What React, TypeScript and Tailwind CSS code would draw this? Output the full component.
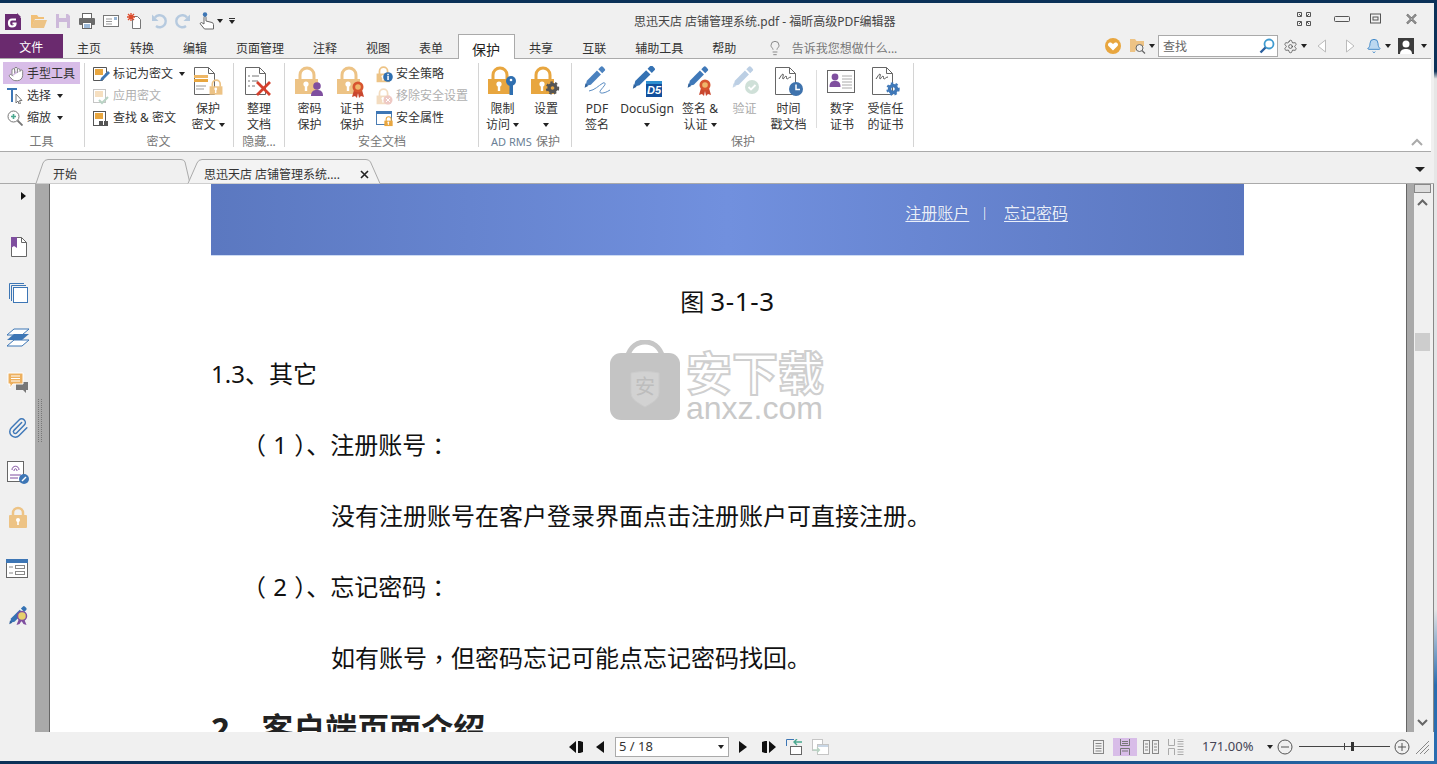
import { Bell, Hand, Lightbulb, Paperclip, Settings } from 'lucide-react';
import type { ReactNode } from 'react';

const ORANGE = '#e8a63f';
const SOFT_ORANGE = '#edc385';
const BLUE = '#3d76b5';
const PURPLE = '#7f4f9f';

function Caret({ className = 'border-t-[#222]' }: { className?: string }) {
  return <span className={`inline-block w-0 h-0 border-x-[3.5px] border-t-[4px] border-x-transparent ${className}`} />;
}

function Lock({ color }: { color: string }) {
  return (
    <>
      <path d="M6 14V9a7 7 0 0 1 14 0v5" fill="none" stroke={color} strokeWidth="3" />
      <rect x="1" y="13" width="23" height="15" fill={color} />
      <circle cx="12" cy="18" r="2.6" fill="#fff" />
      <rect x="10.8" y="19" width="2.4" height="6" fill="#fff" />
    </>
  );
}

function Big({ children }: { children: ReactNode }) {
  return (
    <svg width="32" height="32" viewBox="0 0 32 32" className="block">
      {children}
    </svg>
  );
}

function GearBadge({ x, y, color, r = 5 }: { x: number; y: number; color: string; r?: number }) {
  return (
    <g>
      <circle cx={x} cy={y} r={r} fill="none" stroke={color} strokeWidth="3.4" />
      <circle cx={x} cy={y} r={r + 2.2} fill="none" stroke={color} strokeWidth="2" strokeDasharray="2.4 2.4" />
    </g>
  );
}

function Ribbon({ x, y }: { x: number; y: number }) {
  return (
    <g>
      <path d={`M${x - 4} ${y + 3}l-2 7 3-1 2 2 1-5 1 5 2-2 3 1-2-7z`} fill="#c9472f" />
      <circle cx={x} cy={y} r="5.5" fill="#d7552f" />
      <circle cx={x} cy={y} r="2.8" fill="#efb66b" />
    </g>
  );
}

function PenShape({ color = BLUE, dark = '#2e5f98' }: { color?: string; dark?: string }) {
  return (
    <>
      <path d="M4 25l1.5-6L17 7.5l4.5 4.5L10 23.5z" fill={color} />
      <path d="M18.5 6l2.5-2.5a2 2 0 0 1 3 0l1.5 1.5a2 2 0 0 1 0 3L23 10.500z" fill={color} />
      <path d="M3 27l1-5 3 3z" fill={dark} />
    </>
  );
}

function DocOutline({ w = 21, h = 28 }: { w?: number; h?: number }) {
  return <path d={`M2.500 1.500h${w - 7}l6 6v${h - 7}h-${w - 1}z M${w - 4.500} 1.500v6h6`} fill="#fff" stroke="#666" strokeWidth="1" />;
}

function Squiggle() {
  return <path d="M6 13c2-3 3-5 4-5s-1 5 0 5 2-3 3-3 0 3 1 3 2-2 4-2" fill="none" stroke="#555" strokeWidth="1" />;
}

const ico = {
  protect: (
    <Big>
      <DocOutline />
      <rect x="2" y="9" width="14" height="3" fill="#eeb765" />
      <rect x="2" y="13" width="14" height="3" fill={ORANGE} />
      <path d="M4 20h10M4 23h8" stroke="#999" />
      <g transform="translate(17 13) scale(.56)">
        <Lock color={SOFT_ORANGE} />
      </g>
    </Big>
  ),
  organize: (
    <Big>
      <DocOutline />
      <path d="M5 10h2M9 10h7M5 15h2M9 15h6M5 20h2M9 20h3" stroke="#777" />
      <path d="M14 16l13 13M27 16L14 29" stroke="#d5402d" strokeWidth="2.8" />
    </Big>
  ),
  passwd: (
    <Big>
      <Lock color={SOFT_ORANGE} />
      <circle cx="23" cy="20" r="3.800" fill={PURPLE} />
      <path d="M17 30c0-5 2.500-6 6-6s6 1 6 6z" fill={PURPLE} />
    </Big>
  ),
  cert: (
    <Big>
      <Lock color={SOFT_ORANGE} />
      <Ribbon x={22} y={21} />
    </Big>
  ),
  limit: (
    <Big>
      <Lock color={ORANGE} />
      <circle cx="24" cy="15" r="5" fill="#2f6fb0" />
      <rect x="22.500" y="17" width="3.500" height="12" fill="#2f6fb0" />
      <circle cx="24" cy="14" r="1.300" fill="#fff" />
    </Big>
  ),
  setting: (
    <Big>
      <Lock color={ORANGE} />
      <GearBadge x={22.500} y={22} color="#555" r={3.500} />
    </Big>
  ),
  pdfSign: (
    <Big>
      <g transform="translate(1 -2) scale(.88)">
        <PenShape color="#4b82bf" />
      </g>
      <path d="M8 25c6-1 9-5 14-8 2-1 3 1 1 3-2 3-6 6-3 7 2 .5 6-1 9-3" fill="none" stroke="#5a8cc2" strokeWidth="1" />
    </Big>
  ),
  docuSign: (
    <Big>
      <g transform="translate(-1 -3) scale(.95)">
        <PenShape color="#3572b3" />
      </g>
      <rect x="15" y="15" width="16" height="16" fill="#124f9c" />
      <rect x="15" y="15" width="16" height="3" fill="#2f8fd0" />
      <text x="16" y="28" fontSize="11" fill="#fff" fontStyle="italic" fontWeight="700" fontFamily="Liberation Sans, sans-serif">D5</text>
    </Big>
  ),
  signCert: (
    <Big>
      <g transform="translate(1 -2) scale(.88)">
        <PenShape color="#3f78b8" />
      </g>
      <Ribbon x={21} y={19} />
    </Big>
  ),
  verify: (
    <Big>
      <g transform="translate(1 -2) scale(.88)">
        <PenShape color="#bccfe4" dark="#c7d7e8" />
      </g>
      <circle cx="23" cy="21" r="7" fill="#cfe0d8" />
      <path d="M19.500 21l2.500 2.500 4.500-4.500" fill="none" stroke="#fff" strokeWidth="1.800" />
    </Big>
  ),
  stamp: (
    <Big>
      <DocOutline />
      <Squiggle />
      <circle cx="23" cy="23" r="7" fill="#3f73ad" />
      <path d="M23 18.500V23.500h4" fill="none" stroke="#fff" strokeWidth="1.500" />
    </Big>
  ),
  digital: (
    <Big>
      <rect x="1.500" y="4.500" width="27" height="22" fill="#fff" stroke="#666" />
      <circle cx="9" cy="11" r="3.400" fill={PURPLE} />
      <path d="M3.500 21c0-5 2-6 5.500-6s5.500 1 5.500 6z" fill={PURPLE} />
      <path d="M16 10h10M16 13h10M16 16h10M16 19h10M16 22h10" stroke="#aaa" />
    </Big>
  ),
  trusted: (
    <Big>
      <DocOutline />
      <Squiggle />
      <GearBadge x={23} y={23} color="#3f78b8" r={3.500} />
    </Big>
  ),
};

function Small({ children }: { children: ReactNode }) {
  return (
    <svg width="17" height="17" viewBox="0 0 17 17" className="block shrink-0">
      {children}
    </svg>
  );
}

const smallIco = {
  mark: (
    <Small>
      <path d="M.500 1.500h13v5l-4 8H.500z" fill="#fff" stroke="#555" />
      <rect x="2" y="3" width="8" height="6" fill={ORANGE} />
      <path d="M7 15l1-3 7-7 2 2-7 7z" fill={BLUE} />
    </Small>
  ),
  apply: (
    <Small>
      <rect x=".500" y="1.500" width="12" height="13" fill="#fff" stroke="#c5c5c5" />
      <rect x="2" y="3" width="8" height="6" fill="#f6dfc0" />
      <path d="M6 12l3 3 6-6" fill="none" stroke="#b9d3c4" strokeWidth="2" />
    </Small>
  ),
  find: (
    <Small>
      <rect x=".500" y="1.500" width="12" height="14" fill="#fff" stroke="#555" />
      <rect x="2" y="3" width="8" height="6" fill={ORANGE} />
      <path d="M6 11h4v5H6zM11 11h4v5h-4z" fill="#555" />
    </Small>
  ),
  policy: (
    <Small>
      <g transform="translate(0 0) scale(.58)">
        <Lock color={SOFT_ORANGE} />
      </g>
      <circle cx="12" cy="11" r="4.800" fill="#2f6fb0" />
      <rect x="11.300" y="10" width="1.500" height="4" fill="#fff" />
      <rect x="11.300" y="7.800" width="1.500" height="1.500" fill="#fff" />
    </Small>
  ),
  remove: (
    <Small>
      <g transform="translate(0 0) scale(.58)">
        <Lock color="#f3dcc0" />
      </g>
      <circle cx="12" cy="12" r="4.500" fill="#eec9c4" />
      <path d="M10 10l4 4M14 10l-4 4" stroke="#fff" />
    </Small>
  ),
  props: (
    <Small>
      <rect x=".500" y="1.500" width="15" height="13" fill="#fff" stroke="#4a7cb3" />
      <rect x="0" y="1" width="16" height="3" fill="#3d76b5" />
      <g transform="translate(8 6) scale(.36)">
        <Lock color={ORANGE} />
      </g>
    </Small>
  ),
};

function BigButton({ icon, lines, w, caret, disabled }: { icon: ReactNode; lines: string[]; w: string; caret?: boolean; disabled?: boolean }) {
  return (
    <div className={`${w} flex flex-col items-center pt-[6px] shrink-0`}>
      <div className="h-[34px] shrink-0 flex items-center justify-center">{icon}</div>
      <div className={`mt-[2px] shrink-0 text-center leading-[16px] ${disabled ? 'text-[#aaa]' : ''}`}>
        {lines.map((line, i) => (
          <div key={line + i} className="whitespace-nowrap flex items-center justify-center gap-[3px] h-[16px]">
            {line}
            {caret && i === lines.length - 1 && <Caret />}
          </div>
        ))}
      </div>
    </div>
  );
}

function SmallRow({ icon, text, caret, disabled }: { icon: ReactNode; text: string; caret?: boolean; disabled?: boolean }) {
  return (
    <div className={`h-[22px] pt-[2px] flex items-center gap-[3px] whitespace-nowrap ${disabled ? 'text-[#b0b0b0]' : ''}`}>
      {icon}
      {text}
      {caret && <span className="ml-[3px] flex"><Caret /></span>}
    </div>
  );
}

function Group({ w, label, children, labelClass = '' }: { w: string; label: ReactNode; children: ReactNode; labelClass?: string }) {
  return (
    <div className={`${w} shrink-0 h-full flex flex-col relative after:absolute after:right-0 after:top-[4px] after:bottom-[4px] after:w-px after:bg-[#d4d4d4]`}>
      <div className="flex-1 flex min-h-0">{children}</div>
      <div className={`h-[20px] pt-[2px] flex items-center justify-center text-[#777] whitespace-nowrap ${labelClass}`}>{label}</div>
    </div>
  );
}

const leftTabs = ['主页', '转换', '编辑', '页面管理', '注释', '视图', '表单'];
const rightTabs = ['共享', '互联', '辅助工具', '帮助'];

function TopRows() {
  return (
    <>
      <div className="h-[31px] flex items-center pl-[5px] pt-[5px] shrink-0">
        <svg width="16" height="17" viewBox="0 0 16 17" className="block">
          <path d="M0 1h12l4 4v12H0z" fill="#6a2b72" />
          <path d="M12 0l4 4h-4z" fill="#6a2b72" />
          <path d="M11 6.500H7c-2 0-3 1.500-3 3.500s1 3.500 3 3.500 3.500-1 3.500-3H7.500" fill="none" stroke="#fff" strokeWidth="2.200" />
        </svg>
        <svg width="16" height="16" viewBox="0 0 16 16" className="block ml-[10px]">
          <path d="M0 2h6l1.500 2H13v2H4L1 14H0z" fill="#f1c078" />
          <path d="M3.500 7H16l-3 8H0z" fill={SOFT_ORANGE} />
        </svg>
        <svg width="16" height="16" viewBox="0 0 16 16" className="block ml-[8px]">
          <path d="M1 1h12l2 2v12H1z" fill="#cdb9da" />
          <rect x="4" y="1" width="7" height="4" fill="#eee" />
          <rect x="4" y="9" width="8" height="6" fill="#eee" />
        </svg>
        <svg width="16" height="16" viewBox="0 0 16 16" className="block ml-[8px]">
          <rect x="3.500" y=".500" width="9" height="5" fill="#fff" stroke="#666" />
          <rect x="0" y="5" width="16" height="7" rx="1" fill="#6b6b6b" />
          <rect x="3.500" y="9.500" width="9" height="6" fill="#fff" stroke="#666" />
          <path d="M5 12h6M5 14h6" stroke={BLUE} />
        </svg>
        <svg width="16" height="16" viewBox="0 0 16 16" className="block ml-[8px]">
          <rect x=".500" y="2.500" width="15" height="11" fill="#fff" stroke="#777" />
          <path d="M3 6h6M3 8.500h6M3 11h6" stroke="#999" />
          <rect x="11" y="4" width="3" height="3" fill="#99b6d5" />
        </svg>
        <svg width="16" height="16" viewBox="0 0 16 16" className="block ml-[8px]">
          <path d="M5.500 3.500h5l3 3v9h-8z" fill="#fff" stroke="#777" />
          <path d="M4 0v8M0 4h8M1 1l6 6M7 1L1 7" stroke="#dd4a2a" strokeWidth="1.300" />
        </svg>
        <svg width="16" height="16" viewBox="0 0 16 16" className="block ml-[8px]">
          <path d="M4 4.500a6 6 0 1 1 1 8.500" fill="none" stroke="#b6cadf" strokeWidth="2.400" />
          <path d="M1 1.500v6.500h6.500z" fill="#b6cadf" />
        </svg>
        <svg width="16" height="16" viewBox="0 0 16 16" className="block ml-[8px]">
          <path d="M12 4.500a6 6 0 1 0-1 8.500" fill="none" stroke="#b6cadf" strokeWidth="2.400" />
          <path d="M15 1.500v6.500H8.500z" fill="#b6cadf" />
        </svg>
        <svg width="16" height="18" viewBox="0 0 16 18" className="block ml-[8px]">
          <path d="M5.500 17L1 11.500l1.500-1L5 12V5.500a1 1 0 0 1 2 0V9l6 1.500c1 .5 1.500 1 1.500 2V17z" fill="#fff" stroke="#666" />
          <circle cx="6" cy="2.500" r="2.200" fill={BLUE} />
        </svg>
        <span className="ml-[2px] flex"><Caret /></span>
        <span className="ml-[6px] flex flex-col gap-[1px] items-center">
          <span className="w-[6px] h-px bg-[#333]" />
          <Caret />
        </span>
        <div className="ml-[399px] mt-[2px] text-[#444] whitespace-nowrap">思迅天店 店铺管理系统.pdf - 福昕高级PDF编辑器</div>
        <div className="ml-auto mb-[5px] flex items-center pr-[17px] text-[#4a5568]">
          <svg width="14" height="14" viewBox="0 0 14 14" className="block">
            <path d="M.500.500h4v4h-4zM9.500.500h4v4h-4zM.500 9.500h4v4h-4zM9.500 9.500h4v4h-4z" fill="none" stroke="#555" />
            <path d="M2 2l2 2M12 2l-2 2M2 12l2-2M12 12l-2-2" stroke="#555" />
          </svg>
          <svg width="16" height="14" viewBox="0 0 16 14" className="block ml-[23px]">
            <rect x=".500" y="4.500" width="15" height="5" rx="1" fill="none" stroke="#555" />
          </svg>
          <svg width="12" height="14" viewBox="0 0 12 14" className="block ml-[20px]">
            <rect x=".500" y="2" width="10" height="9" fill="none" stroke="#555" />
            <rect x="3" y="5" width="5" height="3" fill="none" stroke="#555" />
          </svg>
          <svg width="11" height="14" viewBox="0 0 11 14" className="block ml-[24px]">
            <path d="M1 2.500l9 9M10 2.500l-9 9" stroke="#555" strokeWidth="2.200" />
            <path d="M1 2.500l9 9M10 2.500l-9 9" stroke="#f0f0f0" strokeWidth=".7" />
          </svg>
        </div>
      </div>

      <div className="h-[25px] flex border-b border-[#aaa] mr-[3px] shrink-0">
        <div className="w-[62.5px] bg-[#6a2a6e] text-white flex items-center justify-center pt-[4px]">文件</div>
        {leftTabs.map((tab) => (
          <div key={tab} className="px-[14.5px] pt-[5px] flex items-center whitespace-nowrap">{tab}</div>
        ))}
        <div className="h-[25px] relative z-10 bg-white border border-b-0 border-[#aaa] px-[13.5px] pt-[4px] flex items-center text-[14px] text-[#222]">保护</div>
        {rightTabs.map((tab) => (
          <div key={tab} className="px-[14.5px] pt-[5px] flex items-center whitespace-nowrap">{tab}</div>
        ))}
        <div className="ml-[16px] pt-[3px] flex items-center">
          <Lightbulb size={16} strokeWidth={1.1} className="text-[#666]" />
        </div>
        <div className="ml-[9px] pt-[5px] flex items-center text-[#777] whitespace-nowrap">告诉我您想做什么...</div>
        <div className="ml-auto flex items-center pr-[4px]">
          <svg width="16" height="16" viewBox="0 0 16 16" className="block">
            <circle cx="8" cy="8" r="8" fill={ORANGE} />
            <path d="M8 12.500L3.500 8c-1.500-2 .5-4 2.500-3.500L8 6l2-1.500c2-.5 4 1.500 2.500 3.500z" fill="#fff" />
          </svg>
          <svg width="16" height="16" viewBox="0 0 16 16" className="block ml-[9px]">
            <path d="M0 1h5l1.500 2H14v5H7l-2 6H0z" fill={SOFT_ORANGE} />
            <circle cx="9.500" cy="10" r="3.500" fill="#f0f0f0" stroke="#666" />
            <path d="M12 12.500l3 3" stroke="#666" strokeWidth="1.300" />
          </svg>
          <span className="ml-[3px] flex"><Caret /></span>
          <div className="ml-[3px] w-[120px] h-[22px] bg-white border border-[#aaa] flex items-center justify-between pl-[4px] pr-[2px] text-[#666]">
            <span className="pt-[1px]">查找</span>
            <svg width="16" height="16" viewBox="0 0 16 16" className="block">
              <circle cx="10" cy="6" r="4.500" fill="none" stroke="#3f9bd0" strokeWidth="1.800" />
              <path d="M6.500 9.500L1.500 14.500" stroke="#2b5f9e" strokeWidth="2.400" />
            </svg>
          </div>
          <Settings size={15} strokeWidth={1.2} className="ml-[5px] text-[#444]" />
          <span className="ml-[3px] flex"><Caret /></span>
          <svg width="10" height="14" viewBox="0 0 10 14" className="block ml-[10px]">
            <path d="M8.500 1v12L1 7z" fill="#fff" stroke="#bbb" />
          </svg>
          <svg width="10" height="14" viewBox="0 0 10 14" className="block ml-[18px]">
            <path d="M1.500 1v12L9 7z" fill="#fff" stroke="#bbb" />
          </svg>
          <Bell size={16} strokeWidth={1.4} className="ml-[11px] text-[#3d85c6] fill-[#bcd8f0]" />
          <span className="ml-[3px] flex"><Caret /></span>
          <svg width="16" height="16" viewBox="0 0 16 16" className="block ml-[7px]">
            <rect width="16" height="16" fill="#3c3c3c" />
            <circle cx="8" cy="6" r="3.500" fill="#fff" />
            <path d="M2 16c0-4 3-5 6-5s6 1 6 5z" fill="#fff" />
          </svg>
          <span className="ml-[7px] flex"><Caret /></span>
        </div>
      </div>
    </>
  );
}

function RibbonBar() {
  return (
    <div className="h-[93px] bg-white border-b border-[#aaa] mr-[3px] shrink-0 flex relative text-[#333]">
      <Group w="w-[85px]" label="工具" labelClass="pr-[2px]">
        <div className="pl-[3px] pt-[3px] w-full">
          <div className="h-[22px] w-[77px] bg-[#d8bde8] flex items-center pl-[5px] pt-[1px] gap-[3px] whitespace-nowrap">
            <Hand size={16} strokeWidth={1.3} className="text-[#777] fill-white shrink-0" />
            手型工具
          </div>
          <div className="h-[22px] pt-[2px] flex items-center pl-[4px] gap-[4px] whitespace-nowrap">
            <svg width="16" height="16" viewBox="0 0 16 16" className="block">
              <path d="M0 1h10M5 1v13" stroke={BLUE} strokeWidth="2" fill="none" />
              <path d="M9 6v9l2-2 1 3 1.500-.5-1-3h2.500z" fill="#fff" stroke="#777" />
            </svg>
            选择
            <span className="ml-[2px] flex"><Caret /></span>
          </div>
          <div className="h-[22px] pt-[2px] flex items-center pl-[4px] gap-[4px] whitespace-nowrap">
            <svg width="16" height="16" viewBox="0 0 16 16" className="block">
              <circle cx="6.500" cy="6.500" r="5.500" fill="#fff" stroke="#777" />
              <path d="M4 6.500h5M6.500 4v5" stroke="#4aa88f" strokeWidth="1.600" />
              <path d="M10.500 10.500l5 5" stroke="#777" strokeWidth="1.800" />
            </svg>
            缩放
            <span className="ml-[2px] flex"><Caret /></span>
          </div>
        </div>
      </Group>
      <Group w="w-[149px]" label="密文" labelClass="pr-[2px]">
        <div className="pl-[8px] pt-[3px] w-[101px]">
          <SmallRow icon={smallIco.mark} text="标记为密文" caret />
          <SmallRow icon={smallIco.apply} text="应用密文" disabled />
          <SmallRow icon={smallIco.find} text="查找 & 密文" />
        </div>
        <BigButton icon={ico.protect} lines={['保护', '密文']} w="w-[44px]" caret />
      </Group>
      <Group w="w-[51px]" label="隐藏..." labelClass="pr-[1px]">
        <BigButton icon={ico.organize} lines={['整理', '文档']} w="w-[50px]" />
      </Group>
      <Group w="w-[194px]" label="安全文档">
        <BigButton icon={ico.passwd} lines={['密码', '保护']} w="w-[49px]" />
        <BigButton icon={ico.cert} lines={['证书', '保护']} w="w-[36px]" />
        <div className="pl-[6px] pt-[3px]">
          <SmallRow icon={smallIco.policy} text="安全策略" />
          <SmallRow icon={smallIco.remove} text="移除安全设置" disabled />
          <SmallRow icon={smallIco.props} text="安全属性" />
        </div>
      </Group>
      <Group w="w-[93px]" label={<><span className="text-[11px] mr-[4px] text-[#6b7f96]">AD RMS</span>保护</>}>
        <BigButton icon={ico.limit} lines={['限制', '访问']} w="w-[47px]" caret />
        <div className="w-[40px] flex flex-col items-center pt-[6px] shrink-0">
          <div className="h-[34px] shrink-0 flex items-center justify-center">{ico.setting}</div>
          <div className="mt-[2px] h-[16px] shrink-0 leading-[16px]">设置</div>
          <div className="h-[16px] shrink-0 flex items-center justify-center"><Caret /></div>
        </div>
      </Group>
      <Group w="w-[342px]" label="保护">
        <BigButton icon={ico.pdfSign} lines={['PDF', '签名']} w="w-[50px]" />
        <div className="w-[50px] flex flex-col items-center pt-[6px] shrink-0">
          <div className="h-[34px] shrink-0 flex items-center justify-center">{ico.docuSign}</div>
          <div className="mt-[2px] h-[16px] shrink-0 leading-[16px]">DocuSign</div>
          <div className="h-[16px] shrink-0 flex items-center justify-center"><Caret /></div>
        </div>
        <BigButton icon={ico.signCert} lines={['签名 &', '认证']} w="w-[56px]" caret />
        <BigButton icon={ico.verify} lines={['验证']} w="w-[33px]" disabled />
        <BigButton icon={ico.stamp} lines={['时间', '戳文档']} w="w-[55px]" />
        <div className="w-px h-[58px] mt-[11px] bg-[#ddd] shrink-0" />
        <BigButton icon={ico.digital} lines={['数字', '证书']} w="w-[50px]" />
        <BigButton icon={ico.trusted} lines={['受信任', '的证书']} w="w-[37px]" />
      </Group>
      <svg width="12" height="8" viewBox="0 0 12 8" className="absolute right-[8px] bottom-[5px]">
        <path d="M1 7l5-5 5 5" fill="none" stroke="#aaa" strokeWidth="2" />
      </svg>
    </div>
  );
}

function DocTabs() {
  return (
    <div className="h-[32px] border-b border-[#aaa] shrink-0 flex items-end relative">
      <svg width="360" height="25" viewBox="0 0 360 25" className="absolute left-[35px] bottom-[-1px]">
        <path d="M1 24.500L8 4Q9.500 .5 13 .5H146Q149 .5 150 3L155 24.500" fill="#f0f0f0" stroke="#aaa" />
        <path d="M153 24.500L162 4Q163.500 .5 167 .5H331Q334 .5 335.500 3L345 24.500" fill="#f3f3f3" stroke="#aaa" />
      </svg>
      <div className="relative ml-[53px] w-[151px] h-[22px] pt-[6px] flex items-center">开始</div>
      <div className="relative w-[156px] h-[22px] pt-[6px] flex items-center whitespace-nowrap">思迅天店 店铺管理系统....</div>
      <svg width="9" height="9" viewBox="0 0 9 9" className="relative mb-[4px]">
        <path d="M1 1l7 7M8 1L1 8" stroke="#222" strokeWidth="1.600" />
      </svg>
      <span className="absolute right-[9px] top-[15px] w-0 h-0 border-x-[5px] border-t-[5px] border-x-transparent border-t-[#222]" />
    </div>
  );
}

function SideIcons() {
  return (
    <div className="w-[35px] shrink-0 flex flex-col items-center">
      <span className="ml-[12px] mt-[8px] w-0 h-0 border-y-[4px] border-l-[5px] border-y-transparent border-l-[#111]" />
      <svg width="22" height="22" viewBox="0 0 22 22" className="block mt-[36px]">
        <path d="M4.500 1.500h10l5 5v14h-15z" fill="#fff" stroke="#666" />
        <path d="M14.500 1.500v5h5" fill="none" stroke="#666" />
        <path d="M4 1h6v11l-3-2-3 2z" fill={PURPLE} />
      </svg>
      <svg width="22" height="22" viewBox="0 0 22 22" className="block mt-[24px]">
        <path d="M2.500 17V1.500H17" fill="none" stroke={BLUE} />
        <path d="M4.500 19V3.500H19" fill="none" stroke={BLUE} />
        <rect x="6.500" y="5.500" width="14" height="15" fill="#fff" stroke={BLUE} />
      </svg>
      <svg width="24" height="22" viewBox="0 0 24 22" className="block mt-[23px]">
        <path d="M1 8L8 2h15l-7 6z" fill="#fff" stroke={BLUE} />
        <path d="M1 13l7-6h15l-7 6z" fill={BLUE} />
        <path d="M1 19l7-6h15l-7 6z" fill="#fff" stroke={BLUE} />
      </svg>
      <svg width="22" height="22" viewBox="0 0 22 22" className="block mt-[23px]">
        <path d="M9 10h12v8h-2v3l-3-3H9z" fill="#777" />
        <path d="M1 1h15v11H6l-3 4v-4H1z" fill="#edb05f" stroke="#fff" />
        <path d="M4 4h9M4 6.500h9M4 9h9" stroke="#fff" />
      </svg>
      <Paperclip size={22} strokeWidth={1.6} className="mt-[23px] text-[#3f78b8]" />
      <svg width="22" height="24" viewBox="0 0 22 24" className="block mt-[22px]">
        <rect x=".500" y=".500" width="16" height="20" fill="#fff" stroke="#666" />
        <path d="M5 9c0-5 7-5 7 0M7 10c0-3 3-3 3 0M3 14h11M3 17h8" fill="none" stroke={PURPLE} />
        <circle cx="17" cy="18" r="5" fill={BLUE} />
        <path d="M15 20l4-4" stroke="#fff" strokeWidth="1.500" />
      </svg>
      <svg width="20" height="23" viewBox="0 0 20 23" className="block mt-[21px]">
        <path d="M5 10V7a5 5 0 0 1 10 0v3" fill="none" stroke={SOFT_ORANGE} strokeWidth="2.500" />
        <rect x="1" y="9" width="18" height="13" rx="1" fill={SOFT_ORANGE} />
        <circle cx="10" cy="14" r="2" fill="#fff" />
        <rect x="9.200" y="15" width="1.600" height="4" fill="#fff" />
      </svg>
      <svg width="23" height="20" viewBox="0 0 23 20" className="block mt-[30px]">
        <rect x=".500" y=".500" width="21" height="18" fill="#fff" stroke="#666" />
        <rect width="22" height="4" fill={BLUE} />
        <path d="M3 8h4M3 14h4" stroke="#888" />
        <rect x="9.500" y="6.500" width="9" height="3" fill="none" stroke="#888" />
        <rect x="9.500" y="12.500" width="9" height="3" fill="none" stroke="#888" />
      </svg>
      <svg width="22" height="22" viewBox="0 0 22 22" className="block mt-[25px]">
        <g transform="scale(.75)">
          <PenShape color="#3572b3" />
        </g>
        <circle cx="15" cy="12" r="4.500" fill="#e7d06c" stroke={PURPLE} strokeWidth="1.500" />
        <path d="M11.500 16l-2 5 3-1 2-3 2 3 3 1-2-5" fill={PURPLE} />
      </svg>
    </div>
  );
}

function Watermark() {
  return (
    <div className="absolute left-[560px] top-[156px] flex">
      <svg width="70" height="80" viewBox="0 0 70 80" className="block">
        <path d="M17 18C20 6 28 2 35 2s15 4 18 16" fill="none" stroke="#c6c6c6" strokeWidth="5" />
        <rect y="13" width="70" height="67" rx="11" fill="#c4c4c4" />
        <path d="M21 33c9-2 19-2 28 0v20c0 7-9 11-14 14-5-3-14-7-14-14z" fill="#d2d2d2" stroke="#cbcbcb" />
      </svg>
      <div className="absolute left-[25px] top-[35px] text-[#bdbdbd] text-[20px] leading-[24px]">安</div>
      <div className="ml-[6px] flex flex-col items-start">
        <div className="mt-[10px] text-white font-bold text-[46px] leading-[44px] whitespace-nowrap [-webkit-text-stroke:2px_#cfcfcf]">安下载</div>
        <div className="font-['Liberation_Sans',sans-serif] text-[#c9c9c9] text-[32px] leading-[28px] whitespace-nowrap">anxz.com</div>
      </div>
    </div>
  );
}

function Page() {
  const cjkTc = "font-['Noto_Sans_CJK_TC',sans-serif]";
  return (
    <div className="flex-1 min-w-0 bg-white relative overflow-hidden pl-[161px] pr-[162px] text-[#111]">
      <div className="h-[72px] border-b border-[#cddbf3] bg-[linear-gradient(90deg,#5b78c0_0%,#7190de_50%,#5a76bf_100%)] flex items-center justify-end pr-[176px] pb-[14px] text-[16px] text-[#e8eefa] [text-shadow:0_0_1px_#4a66b0]">
        <span className="underline underline-offset-2">注册账户</span>
        <span className="mx-[12px] text-[12px]">|</span>
        <span className="underline underline-offset-2 ml-[4px]">忘记密码</span>
      </div>
      <div className="mt-[11px] pb-[2px] h-[71px] flex items-center justify-center gap-[6px] text-[24px] whitespace-nowrap">
        图<span className="text-[26px] tracking-[.6px]">3-1-3</span>
      </div>
      <div className="h-[71px] flex items-center text-[24px] whitespace-nowrap">1.3、其它</div>
      <div className="h-[71px] flex items-center text-[24px] pl-[31px] whitespace-nowrap [word-spacing:1px]">
        （ 1 ）、注册账号<span className={cjkTc}>：</span>
      </div>
      <div className="h-[71px] pt-[1px] flex items-center text-[24px] pl-[120px] whitespace-nowrap">没有注册账号在客户登录界面点击注册账户可直接注册。</div>
      <div className="h-[71px] flex items-center text-[24px] pl-[31px] whitespace-nowrap [word-spacing:1px]">
        （ 2 ）、忘记密码<span className={cjkTc}>：</span>
      </div>
      <div className="h-[71px] pt-[1px] flex items-center text-[24px] pl-[120px] whitespace-nowrap">
        如有账号<span className={cjkTc}>，</span>但密码忘记可能点忘记密码找回。
      </div>
      <div className="h-[71px] flex items-center text-[32px] font-bold whitespace-nowrap text-[#222]">2、客户端页面介绍</div>
      <Watermark />
    </div>
  );
}

function ScrollBar() {
  return (
    <div className="w-[20px] shrink-0 border-r border-[#888] flex flex-col">
      <div className="w-[17px] h-[9px] bg-[#ddd] border border-[#888]" />
      <svg width="17" height="8" viewBox="0 0 17 8" className="block mt-[5px]">
        <path d="M4 7l4.500-4.500L13 7" fill="none" stroke="#666" strokeWidth="2" />
      </svg>
      <div className="mt-[127px] ml-px w-[15px] h-[18px] bg-[#cdcdcd]" />
      <svg width="17" height="8" viewBox="0 0 17 8" className="block mt-auto mb-[5px]">
        <path d="M4 1l4.500 4.500L13 1" fill="none" stroke="#666" strokeWidth="2" />
      </svg>
    </div>
  );
}

function StatusBar() {
  return (
    <div className="h-[29px] shrink-0 flex items-center">
      <svg width="14" height="12" viewBox="0 0 14 12" className="block ml-[569px]"><path d="M7 0v12L0 6zM9 0h2l3 1v10l-3 1H9z" fill="#111" /></svg>
      <svg width="8" height="12" viewBox="0 0 8 12" className="block ml-[13px]"><path d="M8 0v12L0 6z" fill="#111" /></svg>
      <div className="ml-[11px] w-[114px] h-[20px] bg-white border border-[#aaa] flex items-center justify-between pl-[3px] pr-[4px] text-[#333] text-[13px]">
        5 / 18
        <Caret />
      </div>
      <svg width="8" height="12" viewBox="0 0 8 12" className="block ml-[10px]"><path d="M0 0v12l8-6z" fill="#111" /></svg>
      <svg width="14" height="12" viewBox="0 0 14 12" className="block ml-[15px]"><path d="M7 0v12l7-6zM5 0H3L0 1v10l3 1h2z" fill="#111" /></svg>
      <svg width="17" height="16" viewBox="0 0 17 16" className="block ml-[10px]">
        <path d="M.500 7V.500H8" fill="none" stroke="#3d76b5" />
        <rect x="4.500" y="7.500" width="11" height="8" fill="#fff" stroke="#666" />
        <path d="M16 3H9M11 0L8 3l3 3" fill="none" stroke="#4aa88f" strokeWidth="1.400" />
      </svg>
      <svg width="17" height="16" viewBox="0 0 17 16" className="block ml-[9px]">
        <rect x=".500" y=".500" width="10" height="11" fill="#fff" stroke="#c5c5c5" />
        <rect x="5.500" y="5.500" width="11" height="10" fill="#fff" stroke="#c5c5c5" />
        <rect x="6" y="6" width="10" height="2" fill="#c9d7e6" />
        <path d="M1 11h6M5 8.500l2.500 2.500L5 13.500" fill="none" stroke="#b9d3c4" strokeWidth="1.300" />
      </svg>
      <svg width="12" height="14" viewBox="0 0 12 14" className="block ml-[264px]">
        <rect x=".500" y=".500" width="10" height="13" fill="none" stroke="#888" />
        <path d="M2.500 3.500h6M2.500 6h6M2.500 8.500h6M2.500 11h6" stroke="#888" />
      </svg>
      <div className="ml-[8px] w-[24px] h-[18px] bg-[#d8bde8] flex items-center justify-center">
        <svg width="12" height="16" viewBox="0 0 12 16" className="block">
          <path d="M1.500 0v6.500h9V0M1.500 16V9.500h9V16M3 2.500h6M3 4.500h6M3 12h6" fill="none" stroke="#777" />
        </svg>
      </div>
      <svg width="16" height="14" viewBox="0 0 16 14" className="block ml-[6px]">
        <rect x=".500" y=".500" width="6" height="13" fill="none" stroke="#888" />
        <rect x="9.500" y=".500" width="6" height="13" fill="none" stroke="#888" />
        <path d="M2 4h3M2 7h3M2 10h3M11 4h3M11 7h3M11 10h3" stroke="#888" />
      </svg>
      <svg width="16" height="16" viewBox="0 0 16 16" className="block ml-[9px]">
        <path d="M.500 0v6.500h6V0M.500 16V9.500h6V16M9.500 0h6M9.500 2.500h6M9.500 5h6M9.500 7.500h6M9.500 10.500h6M9.500 13h6M9.500 15.500h6" fill="none" stroke="#aaa" />
      </svg>
      <div className="ml-[18px] w-[65px] text-[#445] text-[13px]">171.00%</div>
      <Caret />
      <svg width="16" height="16" viewBox="0 0 16 16" className="block ml-[4px]">
        <circle cx="8" cy="8" r="7" fill="none" stroke="#555" />
        <path d="M4 8h8" stroke="#555" />
      </svg>
      <div className="ml-[6px] w-[91px] h-[11px] flex items-center relative">
        <div className="w-full h-px bg-[#444]" />
        <span className="absolute left-[45px] top-[2px] w-px h-[7px] bg-[#444]" />
        <span className="absolute left-[52px] top-[1px] w-[3px] h-[9px] bg-[#333]" />
      </div>
      <svg width="16" height="16" viewBox="0 0 16 16" className="block ml-[4px]">
        <circle cx="8" cy="8" r="7" fill="none" stroke="#555" />
        <path d="M4 8h8M8 4v8" stroke="#555" />
      </svg>
      <svg width="13" height="13" viewBox="0 0 13 13" className="block ml-[6px] mt-[2px]">
        <path d="M0 13L13 0M4 13l9-9M8 13l5-5" stroke="#888" />
      </svg>
    </div>
  );
}

export default function App() {
  return (
    <div className="w-[1437px] h-[764px] overflow-hidden flex flex-col font-['Noto_Sans','Noto_Sans_CJK_SC',sans-serif] text-[12px] text-[#333]">
      <div className="h-[3px] shrink-0 bg-[#0b3158]" />
      <div className="flex-1 flex min-h-0">
        <div className="w-[1434px] bg-[#f0f0f0] flex flex-col min-h-0">
          <TopRows />
          <RibbonBar />
          <DocTabs />
          <div className="flex-1 flex min-h-0">
            <SideIcons />
            <div className="w-[15px] shrink-0 bg-[#a9a9a9] border-r border-[#666] flex items-center pl-[3px] pb-[76px]">
              <span className="w-[4px] h-[43px] border-x border-dotted border-[#777]" />
            </div>
            <Page />
            <div className="w-[8px] shrink-0 bg-[#a9a9a9] border-l border-[#666]" />
            <ScrollBar />
          </div>
          <StatusBar />
        </div>
        <div className="w-[3px] bg-[linear-gradient(180deg,#0b3158_0%,#0b3158_9%,#e6e6e6_10%,#e6e6e6_80%,#2a6db0_90%,#2a6db0_100%)]" />
      </div>
      <div className="h-[3px] shrink-0 bg-[linear-gradient(90deg,#0b3158_0%,#0d3a68_60%,#2a6db0_100%)]" />
    </div>
  );
}
